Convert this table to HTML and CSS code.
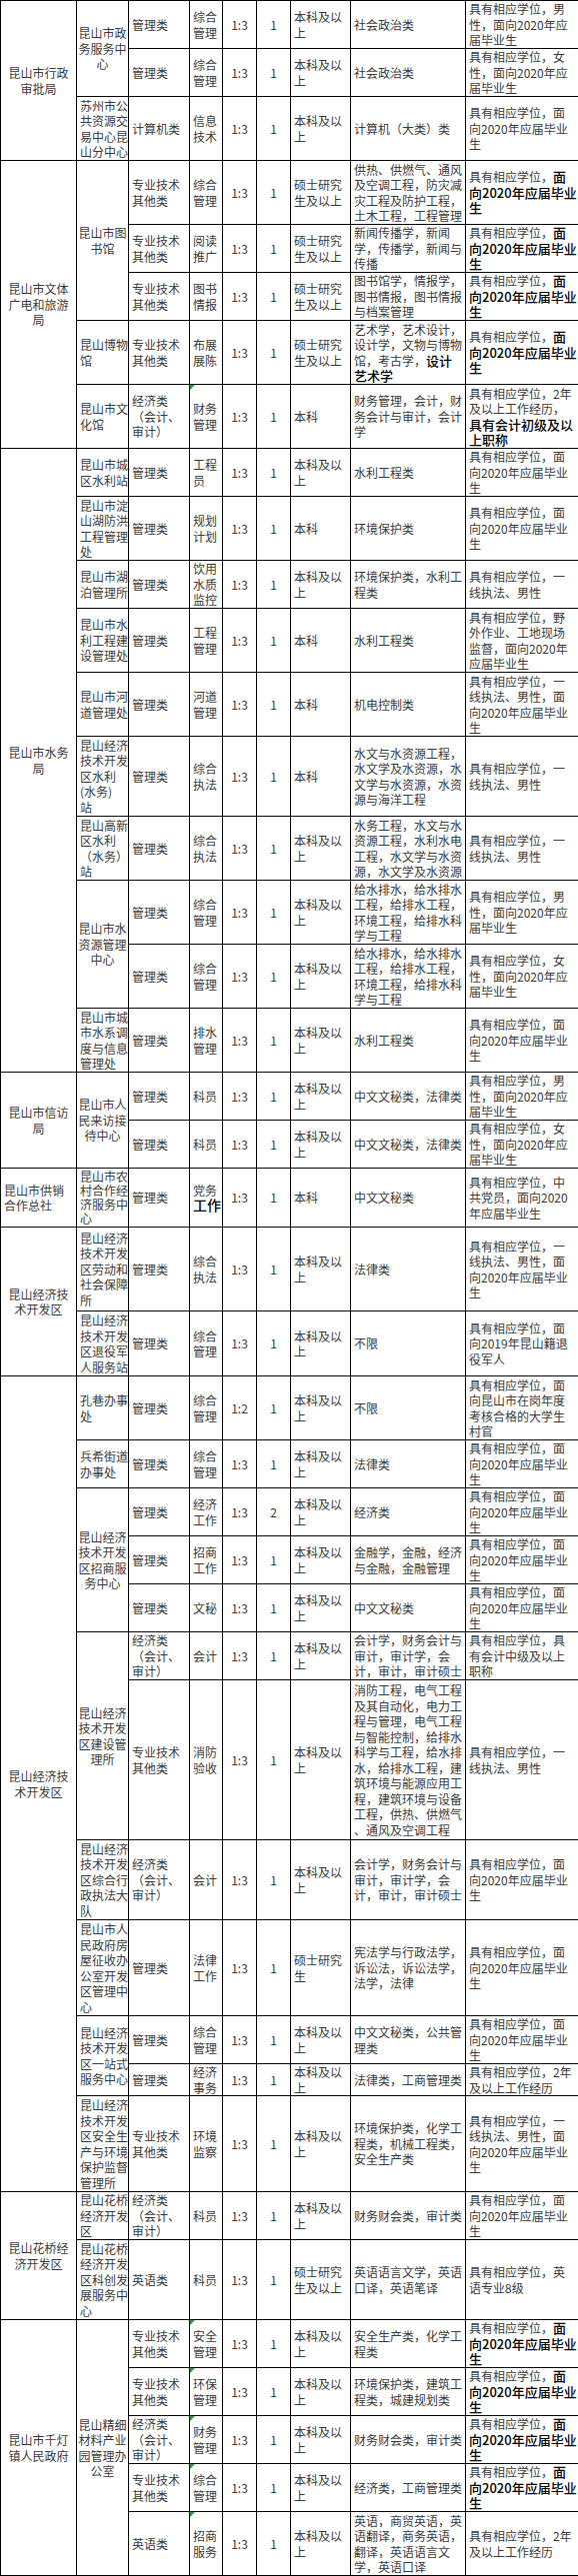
FILE: index.html
```html
<!DOCTYPE html>
<html lang="zh-CN">
<head>
<meta charset="utf-8">
<title>岗位表</title>
<link rel="stylesheet" href="styles.css">
</head>
<body>
<table class="jobs">
<colgroup>
<col class="c-dept"><col class="c-unit"><col class="c-type"><col class="c-post"><col class="c-ratio"><col class="c-num"><col class="c-edu"><col class="c-major"><col class="c-note">
</colgroup>
<tbody>
<!-- 昆山市行政审批局 -->
<tr class="h48">
<td rowspan="3" class="ctr">昆山市行政<br>审批局</td>
<td rowspan="2" class="ctr">昆山市政<br>务服务中<br>心</td>
<td>管理类</td><td>综合<br>管理</td><td class="ctr">1:3</td><td class="ctr">1</td><td>本科及以<br>上</td><td>社会政治类</td><td>具有相应学位，男<br>性，面向2020年应<br>届毕业生</td>
</tr>
<tr class="h48">
<td>管理类</td><td>综合<br>管理</td><td class="ctr">1:3</td><td class="ctr">1</td><td>本科及以<br>上</td><td>社会政治类</td><td>具有相应学位，女<br>性，面向2020年应<br>届毕业生</td>
</tr>
<tr class="h64">
<td>苏州市公<br>共资源交<br>易中心昆<br>山分中心</td>
<td>计算机类</td><td>信息<br>技术</td><td class="ctr">1:3</td><td class="ctr">1</td><td>本科及以<br>上</td><td>计算机（大类）类</td><td>具有相应学位，面<br>向2020年应届毕业<br>生</td>
</tr>
<!-- 昆山市文体广电和旅游局 -->
<tr class="h64">
<td rowspan="5" class="ctr">昆山市文体<br>广电和旅游<br>局</td>
<td rowspan="3" class="ctr">昆山市图<br>书馆</td>
<td>专业技术<br>其他类</td><td>综合<br>管理</td><td class="ctr">1:3</td><td class="ctr">1</td><td>硕士研究<br>生及以上</td><td>供热、供燃气、通风<br>及空调工程，防灾减<br>灾工程及防护工程，<br>土木工程，工程管理</td><td>具有相应学位，<span class="b">面<br>向2020年应届毕业<br>生</span></td>
</tr>
<tr class="h48">
<td>专业技术<br>其他类</td><td>阅读<br>推广</td><td class="ctr">1:3</td><td class="ctr">1</td><td>硕士研究<br>生及以上</td><td>新闻传播学，新闻<br>学，传播学，新闻与<br>传播</td><td>具有相应学位，<span class="b">面<br>向2020年应届毕业<br>生</span></td>
</tr>
<tr class="h48">
<td>专业技术<br>其他类</td><td>图书<br>情报</td><td class="ctr">1:3</td><td class="ctr">1</td><td>硕士研究<br>生及以上</td><td>图书馆学，情报学，<br>图书情报，图书情报<br>与档案管理</td><td>具有相应学位，<span class="b">面<br>向2020年应届毕业<br>生</span></td>
</tr>
<tr class="h64">
<td>昆山博物<br>馆</td>
<td>专业技术<br>其他类</td><td>布展<br>展陈</td><td class="ctr">1:3</td><td class="ctr">1</td><td>硕士研究<br>生及以上</td><td>艺术学，艺术设计，<br>设计学，文物与博物<br>馆，考古学，<span class="b">设计<br>艺术学</span></td><td>具有相应学位，<span class="b">面<br>向2020年应届毕业<br>生</span></td>
</tr>
<tr class="h64">
<td>昆山市文<br>化馆</td>
<td>经济类<br>（会计、<br>审计）</td><td class="tri">财务<br>管理</td><td class="ctr">1:3</td><td class="ctr">1</td><td>本科</td><td>财务管理，会计，财<br>务会计与审计，会计<br>学</td><td>具有相应学位，2年<br>及以上工作经历，<br><span class="b">具有会计初级及以<br>上职称</span></td>
</tr>
<!-- 昆山市水务局 -->
<tr class="h48">
<td rowspan="10" class="ctr">昆山市水务<br>局</td>
<td>昆山市城<br>区水利站</td>
<td>管理类</td><td>工程<br>员</td><td class="ctr">1:3</td><td class="ctr">1</td><td>本科及以<br>上</td><td>水利工程类</td><td>具有相应学位，面<br>向2020年应届毕业<br>生</td>
</tr>
<tr class="h64">
<td>昆山市淀<br>山湖防洪<br>工程管理<br>处</td>
<td>管理类</td><td>规划<br>计划</td><td class="ctr">1:3</td><td class="ctr">1</td><td>本科</td><td>环境保护类</td><td>具有相应学位，面<br>向2020年应届毕业<br>生</td>
</tr>
<tr class="h48">
<td>昆山市湖<br>泊管理所</td>
<td>管理类</td><td>饮用<br>水质<br>监控</td><td class="ctr">1:3</td><td class="ctr">1</td><td>本科及以<br>上</td><td>环境保护类，水利工<br>程类</td><td>具有相应学位，一<br>线执法、男性</td>
</tr>
<tr class="h64">
<td>昆山市水<br>利工程建<br>设管理处</td>
<td>管理类</td><td>工程<br>管理</td><td class="ctr">1:3</td><td class="ctr">1</td><td>本科</td><td>水利工程类</td><td>具有相应学位，野<br>外作业、工地现场<br>监督，面向2020年<br>应届毕业生</td>
</tr>
<tr class="h64">
<td>昆山市河<br>道管理处</td>
<td>管理类</td><td>河道<br>管理</td><td class="ctr">1:3</td><td class="ctr">1</td><td>本科</td><td>机电控制类</td><td>具有相应学位，一<br>线执法、男性，面<br>向2020年应届毕业<br>生</td>
</tr>
<tr class="h80">
<td>昆山经济<br>技术开发<br>区水利<br>(水务)<br>站</td>
<td>管理类</td><td>综合<br>执法</td><td class="ctr">1:3</td><td class="ctr">1</td><td>本科</td><td>水文与水资源工程，<br>水文学及水资源，水<br>文学与水资源，水资<br>源与海洋工程</td><td>具有相应学位，一<br>线执法、男性</td>
</tr>
<tr class="h64">
<td>昆山高新<br>区水利<br>（水务）<br>站</td>
<td>管理类</td><td>综合<br>执法</td><td class="ctr">1:3</td><td class="ctr">1</td><td>本科及以<br>上</td><td>水务工程，水文与水<br>资源工程，水利水电<br>工程，水文学与水资<br>源，水文学及水资源</td><td>具有相应学位，一<br>线执法、男性</td>
</tr>
<tr class="h64">
<td rowspan="2" class="ctr">昆山市水<br>资源管理<br>中心</td>
<td>管理类</td><td>综合<br>管理</td><td class="ctr">1:3</td><td class="ctr">1</td><td>本科及以<br>上</td><td>给水排水，给水排水<br>工程，给排水工程，<br>环境工程，给排水科<br>学与工程</td><td>具有相应学位，男<br>性，面向2020年应<br>届毕业生</td>
</tr>
<tr class="h64">
<td>管理类</td><td>综合<br>管理</td><td class="ctr">1:3</td><td class="ctr">1</td><td>本科及以<br>上</td><td>给水排水，给水排水<br>工程，给排水工程，<br>环境工程，给排水科<br>学与工程</td><td>具有相应学位，女<br>性，面向2020年应<br>届毕业生</td>
</tr>
<tr class="h64">
<td>昆山市城<br>市水系调<br>度与信息<br>管理处</td>
<td>管理类</td><td>排水<br>管理</td><td class="ctr">1:3</td><td class="ctr">1</td><td>本科及以<br>上</td><td>水利工程类</td><td>具有相应学位，面<br>向2020年应届毕业<br>生</td>
</tr>
<!-- 昆山市信访局 -->
<tr class="h48">
<td rowspan="2" class="ctr">昆山市信访<br>局</td>
<td rowspan="2" class="ctr">昆山市人<br>民来访接<br>待中心</td>
<td>管理类</td><td>科员</td><td class="ctr">1:3</td><td class="ctr">1</td><td>本科及以<br>上</td><td>中文文秘类，法律类</td><td>具有相应学位，男<br>性，面向2020年应<br>届毕业生</td>
</tr>
<tr class="h48">
<td>管理类</td><td>科员</td><td class="ctr">1:3</td><td class="ctr">1</td><td>本科及以<br>上</td><td>中文文秘类，法律类</td><td>具有相应学位，女<br>性，面向2020年应<br>届毕业生</td>
</tr>
<!-- 昆山市供销合作总社 -->
<tr class="h59">
<td>昆山市供销<br>合作总社</td>
<td class="tight">昆山市农<br>村合作经<br>济服务中<br>心</td>
<td>管理类</td><td>党务<br><span class="b big">工作</span></td><td class="ctr">1:3</td><td class="ctr">1</td><td>本科</td><td>中文文秘类</td><td>具有相应学位，中<br>共党员，面向2020<br>年应届毕业生</td>
</tr>
<!-- 昆山经济技术开发区 -->
<tr class="h84">
<td rowspan="2" class="ctr">昆山经济技<br>术开发区</td>
<td>昆山经济<br>技术开发<br>区劳动和<br>社会保障<br>所</td>
<td>管理类</td><td>综合<br>执法</td><td class="ctr">1:3</td><td class="ctr">1</td><td>本科及以<br>上</td><td>法律类</td><td>具有相应学位，一<br>线执法、男性，面<br>向2020年应届毕业<br>生</td>
</tr>
<tr class="h65">
<td>昆山经济<br>技术开发<br>区退役军<br>人服务站</td>
<td>管理类</td><td>综合<br>管理</td><td class="ctr">1:3</td><td class="ctr">1</td><td>本科及以<br>上</td><td>不限</td><td>具有相应学位，面<br>向2019年昆山籍退<br>役军人</td>
</tr>
<!-- 昆山经济技术开发区（二） -->
<tr class="h64">
<td rowspan="12" class="ctr">昆山经济技<br>术开发区</td>
<td>孔巷办事<br>处</td>
<td>管理类</td><td>综合<br>管理</td><td class="ctr">1:2</td><td class="ctr">1</td><td>本科及以<br>上</td><td>不限</td><td>具有相应学位，面<br>向昆山市在岗年度<br>考核合格的大学生<br>村官</td>
</tr>
<tr class="h48">
<td>兵希街道<br>办事处</td>
<td>管理类</td><td>综合<br>管理</td><td class="ctr">1:3</td><td class="ctr">1</td><td>本科及以<br>上</td><td>法律类</td><td>具有相应学位，面<br>向2020年应届毕业<br>生</td>
</tr>
<tr class="h48">
<td rowspan="3" class="ctr">昆山经济<br>技术开发<br>区招商服<br>务中心</td>
<td>管理类</td><td>经济<br>工作</td><td class="ctr">1:3</td><td class="ctr">2</td><td>本科及以<br>上</td><td>经济类</td><td>具有相应学位，面<br>向2020年应届毕业<br>生</td>
</tr>
<tr class="h48">
<td>管理类</td><td>招商<br>工作</td><td class="ctr">1:3</td><td class="ctr">1</td><td>本科及以<br>上</td><td>金融学，金融，经济<br>与金融，金融管理</td><td>具有相应学位，面<br>向2020年应届毕业<br>生</td>
</tr>
<tr class="h48">
<td>管理类</td><td>文秘</td><td class="ctr">1:3</td><td class="ctr">1</td><td>本科及以<br>上</td><td>中文文秘类</td><td>具有相应学位，面<br>向2020年应届毕业<br>生</td>
</tr>
<tr class="h48">
<td rowspan="2" class="ctr">昆山经济<br>技术开发<br>区建设管<br>理所</td>
<td>经济类<br>（会计、<br>审计）</td><td>会计</td><td class="ctr">1:3</td><td class="ctr">1</td><td>本科及以<br>上</td><td>会计学，财务会计与<br>审计，审计学，会<br>计，审计，审计硕士</td><td>具有相应学位，具<br>有会计中级及以上<br>职称</td>
</tr>
<tr class="h160">
<td>专业技术<br>其他类</td><td>消防<br>验收</td><td class="ctr">1:3</td><td class="ctr">1</td><td>本科及以<br>上</td><td>消防工程，电气工程<br>及其自动化，电力工<br>程与管理，电气工程<br>与智能控制，给排水<br>科学与工程，给水排<br>水，给排水工程，建<br>筑环境与能源应用工<br>程，建筑环境与设备<br>工程，供热、供燃气<br>、通风及空调工程</td><td>具有相应学位，一<br>线执法、男性</td>
</tr>
<tr class="h80">
<td>昆山经济<br>技术开发<br>区综合行<br>政执法大<br>队</td>
<td>经济类<br>（会计、<br>审计）</td><td>会计</td><td class="ctr">1:3</td><td class="ctr">1</td><td>本科及以<br>上</td><td>会计学，财务会计与<br>审计，审计学，会<br>计，审计，审计硕士</td><td>具有相应学位，面<br>向2020年应届毕业<br>生</td>
</tr>
<tr class="h96">
<td>昆山市人<br>民政府房<br>屋征收办<br>公室开发<br>区管理中<br>心</td>
<td>管理类</td><td>法律<br>工作</td><td class="ctr">1:3</td><td class="ctr">1</td><td>硕士研究<br>生</td><td>宪法学与行政法学，<br>诉讼法，诉讼法学，<br>法学，法律</td><td>具有相应学位，面<br>向2020年应届毕业<br>生</td>
</tr>
<tr class="h48">
<td rowspan="2">昆山经济<br>技术开发<br>区一站式<br>服务中心</td>
<td>管理类</td><td>综合<br>管理</td><td class="ctr">1:3</td><td class="ctr">1</td><td>本科及以<br>上</td><td>中文文秘类，公共管<br>理类</td><td>具有相应学位，面<br>向2020年应届毕业<br>生</td>
</tr>
<tr class="h32">
<td>管理类</td><td>经济<br>事务</td><td class="ctr">1:3</td><td class="ctr">1</td><td>本科及以<br>上</td><td>法律类，工商管理类</td><td>具有相应学位，2年<br>及以上工作经历</td>
</tr>
<tr class="h96">
<td>昆山经济<br>技术开发<br>区安全生<br>产与环境<br>保护监督<br>管理所</td>
<td>专业技术<br>其他类</td><td>环境<br>监察</td><td class="ctr">1:3</td><td class="ctr">1</td><td>本科及以<br>上</td><td>环境保护类，化学工<br>程类，机械工程类，<br>安全生产类</td><td>具有相应学位，一<br>线执法、男性，面<br>向2020年应届毕业<br>生</td>
</tr>
<!-- 昆山花桥经济开发区 -->
<tr class="h48">
<td rowspan="2" class="ctr">昆山花桥经<br>济开发区</td>
<td>昆山花桥<br>经济开发<br>区</td>
<td>经济类<br>（会计、<br>审计）</td><td>科员</td><td class="ctr">1:3</td><td class="ctr">1</td><td>本科及以<br>上</td><td>财务财会类，审计类</td><td>具有相应学位，面<br>向2020年应届毕业<br>生</td>
</tr>
<tr class="h80">
<td>昆山花桥<br>经济开发<br>区科创发<br>展服务中<br>心</td>
<td>英语类</td><td>科员</td><td class="ctr">1:3</td><td class="ctr">1</td><td>硕士研究<br>生及以上</td><td>英语语言文学，英语<br>口译，英语笔译</td><td>具有相应学位，英<br>语专业8级</td>
</tr>
<!-- 昆山市千灯镇人民政府 -->
<tr class="h48">
<td rowspan="5" class="ctr">昆山市千灯<br>镇人民政府</td>
<td rowspan="5" class="ctr">昆山精细<br>材料产业<br>园管理办<br>公室</td>
<td>专业技术<br>其他类</td><td class="tri">安全<br>管理</td><td class="ctr">1:3</td><td class="ctr">1</td><td>本科及以<br>上</td><td>安全生产类，化学工<br>程类</td><td>具有相应学位，<span class="b">面<br>向2020年应届毕业<br>生</span></td>
</tr>
<tr class="h48">
<td>专业技术<br>其他类</td><td class="tri">环保<br>管理</td><td class="ctr">1:3</td><td class="ctr">1</td><td>本科及以<br>上</td><td>环境保护类，建筑工<br>程类，城建规划类</td><td>具有相应学位，<span class="b">面<br>向2020年应届毕业<br>生</span></td>
</tr>
<tr class="h48">
<td>经济类<br>（会计、<br>审计）</td><td class="tri">财务<br>管理</td><td class="ctr">1:3</td><td class="ctr">1</td><td>本科及以<br>上</td><td>财务财会类，审计类</td><td>具有相应学位，<span class="b">面<br>向2020年应届毕业<br>生</span></td>
</tr>
<tr class="h48">
<td>专业技术<br>其他类</td><td class="tri">综合<br>管理</td><td class="ctr">1:3</td><td class="ctr">1</td><td>本科及以<br>上</td><td>经济类，工商管理类</td><td>具有相应学位，<span class="b">面<br>向2020年应届毕业<br>生</span></td>
</tr>
<tr class="h64">
<td>英语类</td><td class="tri">招商<br>服务</td><td class="ctr">1:3</td><td class="ctr">1</td><td>本科及以<br>上</td><td>英语，商贸英语，英<br>语翻译，商务英语，<br>翻译，英语语言文<br>学，英语口译</td><td>具有相应学位，2年<br>及以上工作经历</td>
</tr>
</tbody>
</table>
</body>
</html>
```

FILE: styles.css
```css
html, body {
  margin: 0;
  padding: 0;
  background: #ffffff;
}

.jobs {
  border-collapse: collapse;
  table-layout: fixed;
  width: 578px;
  font-family: "Noto Sans CJK SC", "Noto Sans", sans-serif;
  font-size: 12px;
  line-height: 15.5px;
  color: #3a3a3a;
}

.c-dept  { width: 76px; }
.c-unit  { width: 52px; }
.c-type  { width: 61px; }
.c-post  { width: 33px; }
.c-ratio { width: 34px; }
.c-num   { width: 34px; }
.c-edu   { width: 60px; }
.c-major { width: 115px; }
.c-note  { width: 113px; }

.jobs td {
  border: 1px solid #000000;
  padding: 0 1px 0 3px;
  vertical-align: middle;
  text-align: left;
  white-space: nowrap;
  overflow: hidden;
}

.jobs td.ctr {
  text-align: center;
  padding: 0 1px;
}

.jobs td.tight {
  line-height: 14px;
}

.jobs td.tri {
  position: relative;
}

.jobs td.tri::before {
  content: "";
  position: absolute;
  left: 0;
  top: 0;
  border-top: 5px solid #2e9b2e;
  border-right: 5px solid transparent;
}

.b {
  color: #000000;
  font-size: 13px;
  line-height: 14px;
  font-weight: 500;
}

.b.big {
  font-size: 14px;
}

.h32  { height: 32px; }
.h48  { height: 48px; }
.h59  { height: 59px; }
.h64  { height: 64px; }
.h65  { height: 65px; }
.h80  { height: 80px; }
.h84  { height: 84px; }
.h96  { height: 96px; }
.h160 { height: 160px; }
```
